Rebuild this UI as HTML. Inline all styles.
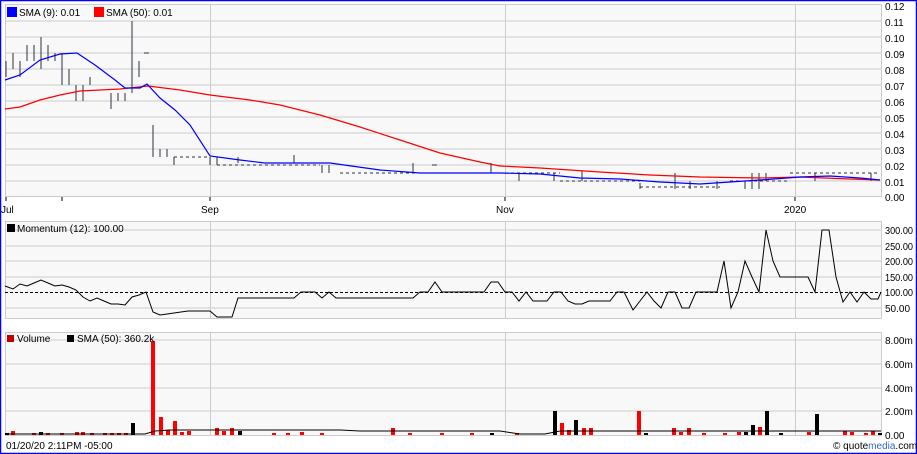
<!DOCTYPE html>
<html><head><meta charset="utf-8"><style>
html,body{margin:0;padding:0;background:#fff}
svg{display:block}
text{font-family:"Liberation Sans",sans-serif;font-size:10px;fill:#000}
</style></head><body>
<svg width="917" height="454" viewBox="0 0 917 454" xmlns="http://www.w3.org/2000/svg">
<rect x="0.5" y="0.5" width="916" height="453" fill="#fff" stroke="#0000ff" stroke-width="1.5"/>
<rect x="5.5" y="4.5" width="876" height="192" fill="#f8f8f8" stroke="#ccc"/>
<g stroke="#ccc" stroke-width="1" shape-rendering="crispEdges">
<path d="M5 21H881M5 37H881M5 53H881M5 69H881M5 85H881M5 101H881M5 117H881M5 133H881M5 149H881M5 165H881M5 181H881"/>
<path d="M210.5 5V197M505.5 5V197M795.5 5V197"/>
</g>
<g stroke="#2a3440" stroke-width="1.2" shape-rendering="crispEdges">
<path d="M6 61V77M13 53V69M20 61V77M27 45V61M34 45V61M41 37V69M48 45V61M55 53V61M62 53V85M69 69V85M76 85V101M83 85V101M90 77V85M111 93V109M118 93V101M125 93V101M132 21V93M139 61V77M153 125V157M160 149V157M167 149V157M174 157V165M210 157V165M217 157V165M238 157V163M294 155V163M322 165V173M329 165V173M413 163V173M491 163V173M519 173V181M554 173V181M582 171V181M640 183V189M675 173V189M690 181V189M717 181V189M745 181V189M752 173V189M759 173V189M766 173V181M815 173V181M871 173V181"/>
<path d="M144 53H149M432 165H437"/>
</g>
<g stroke="#2a3440" stroke-dasharray="3,3" shape-rendering="crispEdges"><path d="M174 157H210M217 165H320M340 173H420M430 173H505M505 173H560M560 181H640M640 187H720M730 181H790M790 173H880"/></g>
<polyline fill="none" stroke="#ff0000" stroke-width="1.2" points="5,109 20,107 40,100 60,95 80,91 100,90 120,89 148,86 180,90 210,95 250,100 280,105 320,115 360,127 400,140 440,153 480,162 500,166 540,168 600,172 650,175 700,177 760,178 800,177 850,179 880,180"/>
<polyline fill="none" stroke="#0000ff" stroke-width="1.2" points="5,80 20,75 40,60 60,54 77,53 95,65 115,80 125,88 140,88 147,84 160,98 175,110 190,125 210,156 240,160 265,163 290,163 330,163 380,170 420,173 500,173 540,174 580,178 620,179 660,182 700,184 730,182 760,180 800,177 830,176 860,178 880,180"/>
<rect x="7" y="7" width="10" height="10" fill="#0000ff"/><text x="19" y="16">SMA (9): 0.01</text>
<rect x="94" y="7" width="10" height="10" fill="#ff0000"/><text x="106" y="16">SMA (50): 0.01</text>
<g>
<text x="885" y="10">0.12</text><text x="885" y="26">0.11</text><text x="885" y="42">0.10</text><text x="885" y="58">0.09</text><text x="885" y="74">0.08</text><text x="885" y="90">0.07</text><text x="885" y="106">0.06</text><text x="885" y="122">0.05</text><text x="885" y="138">0.04</text><text x="885" y="154">0.03</text><text x="885" y="170">0.02</text><text x="885" y="186">0.01</text><text x="885" y="201">0.00</text>
</g>
<g stroke="#000"><path d="M6 197V201M62 197V201M210 197V201M505 197V201M795 197V201"/></g>
<text x="1" y="213">Jul</text><text x="201" y="213">Sep</text><text x="496" y="213">Nov</text><text x="784" y="213">2020</text>
<rect x="5.5" y="221.5" width="876" height="97" fill="#f8f8f8" stroke="#ccc"/>
<g stroke="#ccc" shape-rendering="crispEdges"><path d="M5 230H881M5 246H881M5 261H881M5 277H881M5 308H881M210.5 222V318M505.5 222V318M795.5 222V318"/></g>
<path d="M5 292.5H881" stroke="#000" stroke-dasharray="3,2"/>
<polyline fill="none" stroke="#000" points="5,286 13,289 20,284 27,286 34,283 41,280 48,283 55,286 62,285 69,287 76,290 83,297 90,301 97,298 104,301 111,304 118,304 125,305 132,297 139,295 146,292 153,312 160,315 167,314 174,313 181,312 188,311 195,311 210,311 217,317 232,317 238,298 245,298 266,298 294,298 301,292 315,292 322,298 329,292 336,298 343,298 413,298 420,292 428,292 435,282 442,292 484,292 491,282 498,282 505,292 512,292 519,301 526,292 533,301 547,301 554,292 561,292 568,301 575,304 582,304 589,301 610,301 617,292 624,292 633,310 640,301 647,292 654,301 661,308 668,292 675,292 682,308 689,308 696,292 717,292 724,261 731,308 738,292 745,261 752,277 759,292 766,230 773,261 780,277 801,277 808,277 815,292 822,230 829,230 836,277 843,302 850,292 857,302 864,292 871,299 878,299 881,292"/>
<rect x="7" y="224" width="8" height="8" fill="#000"/><text x="17" y="232">Momentum (12): 100.00</text>
<g><text x="885" y="234" textLength="28" lengthAdjust="spacingAndGlyphs">300.00</text><text x="885" y="250" textLength="28" lengthAdjust="spacingAndGlyphs">250.00</text><text x="885" y="265" textLength="28" lengthAdjust="spacingAndGlyphs">200.00</text><text x="885" y="281" textLength="28" lengthAdjust="spacingAndGlyphs">150.00</text><text x="885" y="296" textLength="28" lengthAdjust="spacingAndGlyphs">100.00</text><text x="885" y="312">50.00</text></g>
<rect x="5.5" y="332.5" width="876" height="103" fill="#f8f8f8" stroke="#ccc"/>
<g stroke="#ccc" shape-rendering="crispEdges"><path d="M5 340H881M5 364H881M5 388H881M5 411H881M210.5 333V435M505.5 333V435M795.5 333V435"/></g>
<g fill="#ff0000">
<rect x="11" y="431" width="4" height="4"/><rect x="32" y="433" width="4" height="2"/><rect x="46" y="433" width="4" height="2"/><rect x="60" y="433" width="4" height="2"/><rect x="75" y="432" width="4" height="3"/><rect x="81" y="432" width="4" height="3"/><rect x="90" y="433" width="4" height="2"/><rect x="103" y="433" width="4" height="2"/><rect x="110" y="433" width="4" height="2"/><rect x="117" y="433" width="4" height="2"/><rect x="124" y="433" width="4" height="2"/>
<rect x="151" y="341" width="4" height="94"/><rect x="159" y="417" width="4" height="18"/><rect x="166" y="430" width="4" height="5"/><rect x="173" y="421" width="4" height="14"/><rect x="180" y="432" width="4" height="3"/><rect x="187" y="431" width="4" height="4"/><rect x="215" y="428" width="4" height="7"/><rect x="222" y="431" width="4" height="4"/><rect x="230" y="428" width="4" height="7"/>
<rect x="272" y="433" width="4" height="2"/><rect x="286" y="433" width="4" height="2"/><rect x="300" y="432" width="4" height="3"/><rect x="320" y="433" width="4" height="2"/><rect x="391" y="428" width="4" height="7"/><rect x="408" y="433" width="4" height="2"/><rect x="440" y="433" width="4" height="2"/><rect x="470" y="433" width="4" height="2"/><rect x="515" y="433" width="4" height="2"/>
<rect x="560" y="423" width="4" height="12"/><rect x="567" y="430" width="4" height="5"/><rect x="582" y="428" width="4" height="7"/><rect x="589" y="428" width="4" height="7"/><rect x="637" y="411" width="4" height="24"/><rect x="672" y="428" width="4" height="7"/><rect x="679" y="432" width="4" height="3"/><rect x="687" y="428" width="4" height="7"/><rect x="702" y="433" width="4" height="2"/><rect x="723" y="433" width="4" height="2"/><rect x="737" y="432" width="4" height="3"/><rect x="758" y="427" width="4" height="8"/><rect x="807" y="432" width="4" height="3"/><rect x="843" y="431" width="4" height="4"/><rect x="850" y="432" width="4" height="3"/><rect x="864" y="433" width="4" height="2"/><rect x="871" y="431" width="4" height="4"/>
</g>
<g fill="#000">
<rect x="5" y="433" width="4" height="2"/><rect x="39" y="432" width="4" height="3"/><rect x="131" y="423" width="4" height="12"/><rect x="238" y="431" width="4" height="4"/><rect x="490" y="433" width="4" height="2"/><rect x="553" y="411" width="4" height="24"/><rect x="574" y="420" width="4" height="15"/><rect x="644" y="433" width="4" height="2"/><rect x="744" y="432" width="4" height="3"/><rect x="751" y="425" width="4" height="10"/><rect x="765" y="411" width="4" height="24"/><rect x="779" y="433" width="4" height="2"/><rect x="815" y="414" width="4" height="21"/><rect x="878" y="433" width="4" height="2"/>
</g>
<polyline fill="none" stroke="#000" points="5,434 145,434 155,431 170,430 210,430 340,430 360,431 500,431 520,434 545,434 560,431 700,431 760,431 881,431"/>
<rect x="7" y="335" width="7" height="7" fill="#c00000"/><text x="17" y="342">Volume</text>
<rect x="67" y="335" width="7" height="7" fill="#000"/><text x="77" y="342">SMA (50): 360.2k</text>
<text x="885" y="344">8.00m</text><text x="885" y="368">6.00m</text><text x="885" y="392">4.00m</text><text x="885" y="415">2.00m</text><text x="885" y="439">0.00</text>
<text x="6" y="449">01/20/20 2:11PM -05:00</text>
<text x="833" y="449">© quote<tspan style="fill:#3366cc">media</tspan>.com</text>
</svg>
</body></html>
